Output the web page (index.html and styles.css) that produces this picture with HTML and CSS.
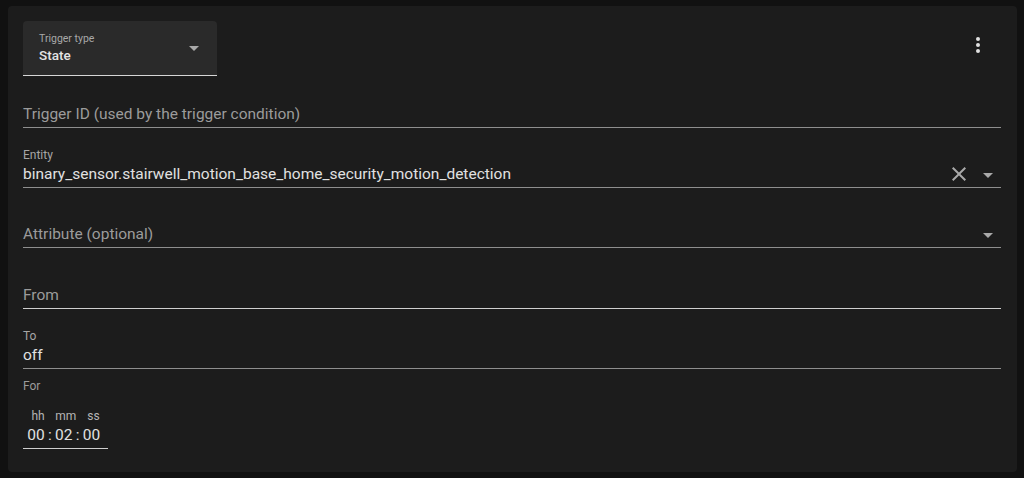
FILE: index.html
```html
<!DOCTYPE html>
<html>
<head>
<meta charset="utf-8">
<link rel="stylesheet" href="styles.css">
</head>
<body>
<div class="card">
  <div class="header">
    <div class="select">
      <div class="select-text">
        <div class="select-label">Trigger type</div>
        <div class="select-value">State</div>
      </div>
      <svg class="arrow" viewBox="0 0 24 24"><path d="M7,10L12,15L17,10H7Z"/></svg>
    </div>
    <button class="menu-btn" aria-label="menu">
      <svg viewBox="0 0 24 24"><path d="M12,16A2,2 0 0,1 14,18A2,2 0 0,1 12,20A2,2 0 0,1 10,18A2,2 0 0,1 12,16M12,10A2,2 0 0,1 14,12A2,2 0 0,1 12,14A2,2 0 0,1 10,12A2,2 0 0,1 12,10M12,4A2,2 0 0,1 14,6A2,2 0 0,1 12,8A2,2 0 0,1 10,6A2,2 0 0,1 12,4Z"/></svg>
    </button>
  </div>

  <div class="field first">
    <div class="value-row"><span class="placeholder">Trigger ID (used by the trigger condition)</span></div>
  </div>

  <div class="field">
    <div class="label">Entity</div>
    <div class="value-row">
      <span class="value">binary_sensor.stairwell_motion_base_home_security_motion_detection</span>
      <svg class="clear" viewBox="0 0 24 24"><path d="M19,6.41L17.59,5L12,10.59L6.41,5L5,6.41L10.59,12L5,17.59L6.41,19L12,13.41L17.59,19L19,17.59L13.41,12L19,6.41Z"/></svg>
      <svg class="arrow" viewBox="0 0 24 24"><path d="M7,10L12,15L17,10H7Z"/></svg>
    </div>
  </div>

  <div class="field">
    <div class="value-row">
      <span class="placeholder">Attribute (optional)</span>
      <svg class="arrow" viewBox="0 0 24 24"><path d="M7,10L12,15L17,10H7Z"/></svg>
    </div>
  </div>

  <div class="field light wide-gap">
    <div class="value-row"><span class="placeholder">From</span></div>
  </div>

  <div class="field">
    <div class="label">To</div>
    <div class="value-row"><span class="value">off</span></div>
  </div>

  <div class="for-label">For</div>
  <div class="time">
    <div class="unit"><span class="unit-lbl">hh</span><span class="unit-val">00</span></div>
    <span class="sep">:</span>
    <div class="unit"><span class="unit-lbl">mm</span><span class="unit-val">02</span></div>
    <span class="sep">:</span>
    <div class="unit"><span class="unit-lbl">ss</span><span class="unit-val">00</span></div>
  </div>
</div>
</body>
</html>
```

FILE: styles.css
```css
html, body {
  margin: 0;
  padding: 0;
  background: #111111;
  font-family: Roboto, "Noto Sans", sans-serif;
}

.card {
  margin: 6px 0 0 8px;
  width: 1009px;
  height: 466px;
  box-sizing: border-box;
  padding: 15px 16px 0 15px;
  background: #1c1c1c;
  border-radius: 4px;
}

.header {
  display: flex;
  justify-content: space-between;
  align-items: flex-start;
}

.select {
  width: 194px;
  height: 55px;
  box-sizing: border-box;
  background: #2a2a2a;
  border-radius: 4px 4px 0 0;
  border-bottom: 1px solid #d6d6d6;
  display: flex;
  align-items: center;
  padding: 0 11px 1px 16px;
}

.select-text {
  flex: 1;
}

.select-label {
  font-size: 10.5px;
  line-height: 14px;
  color: #a8a8a8;
}

.select-value {
  font-size: 13.5px;
  line-height: 18px;
  color: #e4e4e4;
  font-weight: 500;
}

.arrow {
  width: 24px;
  height: 24px;
  fill: #a9a9a9;
  flex: none;
}

.menu-btn {
  width: 48px;
  height: 48px;
  margin-right: -1px;
  padding: 12px;
  border: none;
  background: none;
  box-sizing: border-box;
}

.menu-btn svg {
  width: 24px;
  height: 24px;
  fill: #e1e1e1;
  display: block;
}

.field {
  height: 56px;
  margin-top: 4px;
  box-sizing: border-box;
  border-bottom: 1px solid #8e8e8e;
  display: flex;
  flex-direction: column;
  justify-content: flex-end;
  padding-bottom: 0.6px;
}

.field.first {
  height: 52px;
  margin-top: 0;
}

.field.wide-gap {
  margin-top: 5px;
}

.field.light {
  border-bottom-color: #cfcfcf;
}

.label {
  font-size: 12px;
  line-height: 16px;
  color: #a6a6a6;
  margin-bottom: -1px;
}

.value-row {
  display: flex;
  align-items: center;
  height: 24px;
}

.value, .placeholder {
  flex: 1;
  font-size: 15.5px;
  line-height: 24px;
  white-space: nowrap;
}

.value {
  color: #e1e1e1;
}

.placeholder {
  color: #9b9b9b;
}

.clear {
  width: 24px;
  height: 24px;
  fill: #a9a9a9;
  margin-right: 5px;
  flex: none;
}

.value-row .arrow {
  margin-right: 1px;
  margin-top: 1px;
}

.for-label {
  margin-top: 9px;
  font-size: 12px;
  line-height: 16px;
  color: #9b9b9b;
}

.time {
  margin-top: 14px;
  display: inline-flex;
  align-items: flex-end;
  padding: 0 7px 3px 4px;
  border-bottom: 1px solid #cfcfcf;
}

.unit {
  width: 18px;
  display: flex;
  flex-direction: column;
  align-items: center;
}

.unit-lbl {
  font-size: 12px;
  line-height: 16px;
  color: #b5b5b5;
  margin-bottom: 1px;
  padding-left: 4px;
  white-space: nowrap;
}

.unit-val, .sep {
  font-size: 15.5px;
  line-height: 20px;
  color: #e1e1e1;
}

.sep {
  padding: 0 3px;
}
```
